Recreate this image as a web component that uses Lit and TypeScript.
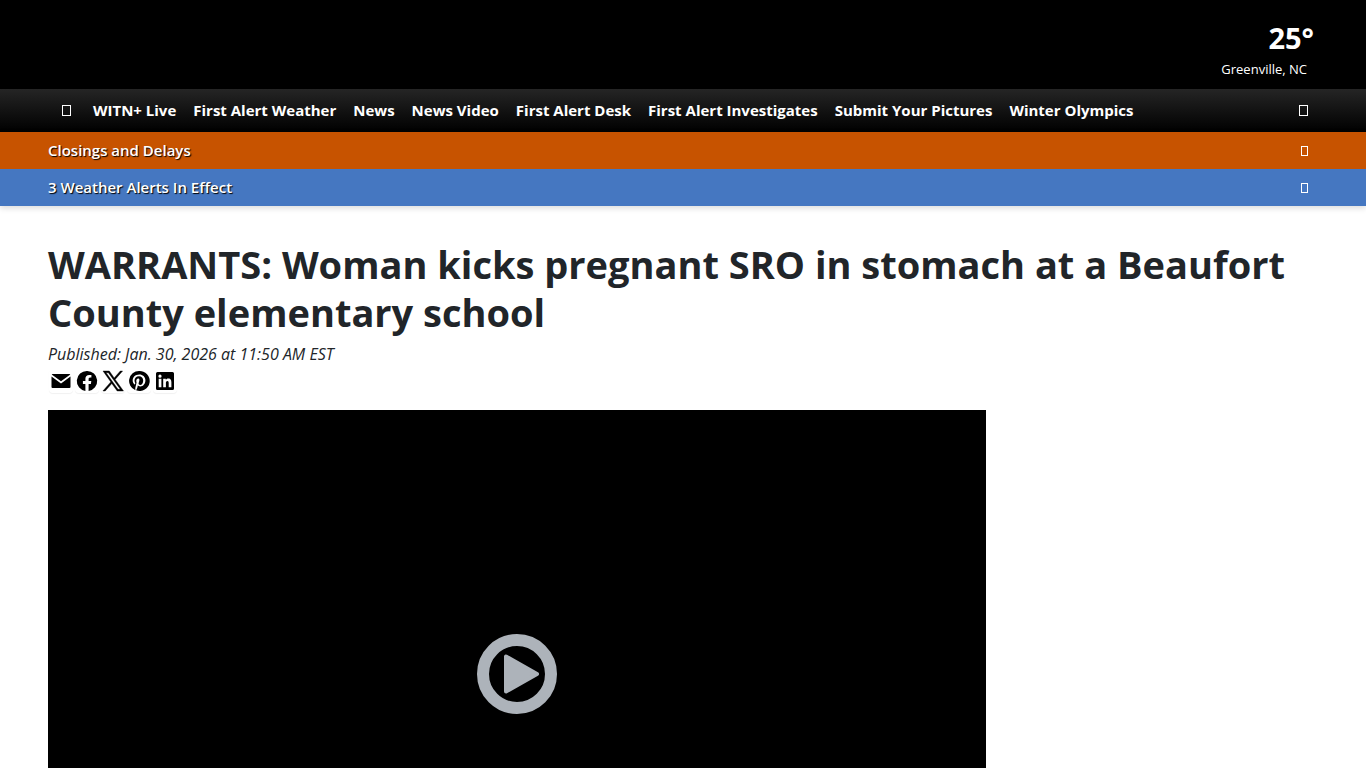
import { LitElement, html, css, svg } from "lit";
import { customElement } from "lit/decorators.js";

const NAV_LINKS = [
  "WITN+ Live",
  "First Alert Weather",
  "News",
  "News Video",
  "First Alert Desk",
  "First Alert Investigates",
  "Submit Your Pictures",
  "Winter Olympics",
];

const ALERTS = [
  { text: "Closings and Delays", tone: "closings" },
  { text: "3 Weather Alerts In Effect", tone: "weather" },
];

const SHARE_LINKS = [
  {
    label: "Email",
    shape: svg`<path d="M3.500 5h17a1 1 0 0 1 .8.4L12 12.300 2.700 5.400a1 1 0 0 1 .8-.4z"/><path d="M2.500 7.500 12 14.600l9.500-7.100v10.500a1 1 0 0 1-1 1h-17a1 1 0 0 1-1-1z"/>`,
  },
  {
    label: "Facebook",
    shape: svg`<path d="M12 2a10 10 0 0 0-1.6 19.9v-7H7.9V12h2.5V9.8c0-2.5 1.5-3.9 3.8-3.9 1.1 0 2.2.2 2.2.2v2.5h-1.2c-1.2 0-1.6.8-1.6 1.6V12h2.7l-.4 2.9h-2.3v7A10 10 0 0 0 12 2z"/>`,
  },
  {
    label: "X",
    shape: svg`<path fill-rule="evenodd" stroke="currentColor" stroke-width="0.4" d="M2 2h6.3l4.9 6.9L19.300 2H21.600l-7.400 8.400L22.500 22h-6.300l-5.400-7.500L4.200 22H1.900l7.900-9.100zM5.100 3.700 17 20.300h2.300L7.400 3.700z"/>`,
  },
  {
    label: "Pinterest",
    shape: svg`<path d="M12 2a10 10 0 0 0-3.600 19.300c-.1-.8-.2-2 0-2.900l1.200-5s-.3-.6-.3-1.500c0-1.400.8-2.400 1.800-2.400.9 0 1.300.6 1.300 1.400 0 .9-.5 2.100-.8 3.300-.2 1 .5 1.800 1.500 1.800 1.800 0 3.100-1.900 3.100-4.600 0-2.400-1.700-4.100-4.200-4.100-2.800 0-4.500 2.100-4.500 4.300 0 .9.3 1.800.7 2.300.1.100.1.200.1.300l-.3 1.100c0 .2-.1.200-.3.100-1.300-.6-2-2.400-2-3.900 0-3.100 2.300-6 6.600-6 3.400 0 6.100 2.400 6.100 5.700 0 3.400-2.200 6.200-5.200 6.200-1 0-2-.5-2.300-1.100l-.6 2.400c-.2.900-.8 1.900-1.200 2.600A10 10 0 1 0 12 2z"/>`,
  },
  {
    label: "LinkedIn",
    shape: svg`<path fill-rule="evenodd" d="M4.500 3h15A1.500 1.500 0 0 1 21 4.500v15a1.500 1.500 0 0 1-1.500 1.500h-15A1.500 1.500 0 0 1 3 19.500v-15A1.500 1.500 0 0 1 4.500 3zM5.700 9.700v8.500h2.700V9.700zM7 5.600a1.600 1.600 0 1 0 0 3.200 1.600 1.600 0 0 0 0-3.200zM10.200 9.700v8.500h2.700V14c0-1.100.3-2.100 1.500-2.100s1.300 1.100 1.300 2.200v4.100h2.700v-4.700c0-2.300-.5-4.100-3.200-4.100-1.200 0-2.100.7-2.400 1.400v-1.100z"/>`,
  },
];

const box = (w: number, h: number) => html`<svg
  width=${w}
  height=${h}
  viewBox="0 0 ${w} ${h}"
  aria-hidden="true"
>
  <rect x="0.5" y="0.5" width=${w - 1} height=${h - 1} fill="none" stroke="currentColor" />
</svg>`;

@customElement("app-root")
export class AppRoot extends LitElement {
  static styles = css`
    :host {
      display: block;
      height: 100vh;
      overflow: hidden;
      background: #fff;
      color: #212529;
      font-family: "Segoe UI", "Open Sans", "Noto Sans", sans-serif;
      font-size: 15px;
      line-height: 24px;
    }
    * {
      box-sizing: border-box;
    }
    a {
      color: inherit;
      text-decoration: none;
    }
    button {
      padding: 0;
      border: 0;
      background: none;
      color: inherit;
      font: inherit;
      cursor: pointer;
    }
    svg {
      display: block;
    }
    .masthead {
      display: flex;
      justify-content: flex-end;
      padding: 18px 52px 8px;
      background: #000;
      color: #fff;
    }
    .conditions {
      display: flex;
      flex-direction: column;
      align-items: flex-end;
    }
    .temp {
      font-size: 29px;
      font-weight: 700;
      line-height: 39px;
    }
    .place {
      padding-right: 7px;
      font-size: 13px;
      line-height: 24px;
    }
    .nav {
      display: flex;
      align-items: center;
      height: 43px;
      padding: 0 58px 0 62px;
      background: linear-gradient(#252525, #000);
      color: #fff;
      font-weight: 700;
    }
    .links {
      display: flex;
      gap: 17px;
      flex: 1;
      margin: 0 0 0 22px;
      padding: 0;
      list-style: none;
      white-space: nowrap;
    }
    .label {
      display: block;
      padding-bottom: 2px;
    }
    .alert {
      display: flex;
      align-items: center;
      justify-content: space-between;
      height: 37px;
      padding: 0 58px 0 48px;
      color: #fff;
      font-weight: 600;
      text-shadow: 1px 1px 1px #000;
    }
    .closings {
      background: #c75300;
    }
    .weather {
      background: #4577c1;
    }
    .alerts {
      box-shadow: 0 2px 6px rgba(0, 0, 0, 0.15);
    }
    main {
      padding: 34px 48px 0;
    }
    h1 {
      margin: 0;
      font-size: 38px;
      font-weight: 700;
      line-height: 48px;
    }
    .published {
      margin: 6px 0 3px;
      font-size: 16px;
      font-style: italic;
    }
    .share {
      display: flex;
      gap: 2px;
      margin: 0 1px 17px;
      color: #000;
    }
    .share a {
      border-radius: 4px;
      box-shadow: 0 1px 1px rgba(0, 0, 0, 0.06);
    }
    .video {
      display: grid;
      place-items: center;
      width: 73.858%;
      aspect-ratio: 16 / 9;
      background: #000;
      color: #adb3ba;
    }
  `;

  render() {
    return html`
      <header>
        <div class="masthead">
          <a class="conditions" href="#weather">
            <span class="temp">25°</span>
            <span class="place">Greenville, NC</span>
          </a>
        </div>
        <nav class="nav">
          <button aria-label="Menu">${box(9, 11)}</button>
          <ul class="links">
            ${NAV_LINKS.map((t) => html`<li><a class="label" href="#">${t}</a></li>`)}
          </ul>
          <button aria-label="Search">${box(9, 11)}</button>
        </nav>
        <div class="alerts">
          ${ALERTS.map(
            (a) => html`<div class="alert ${a.tone}">
              <a class="label" href="#">${a.text}</a>
              <button aria-label="Show ${a.text}">${box(7, 10)}</button>
            </div>`
          )}
        </div>
      </header>
      <main>
        <h1>
          WARRANTS: Woman kicks pregnant SRO in stomach at a Beaufort County
          elementary school
        </h1>
        <p class="published">Published: Jan. 30, 2026 at 11:50 AM EST</p>
        <div class="share">
          ${SHARE_LINKS.map(
            (s) => html`<a href="#" aria-label=${s.label}>
              <svg width="24" height="24" viewBox="0 0 24 24" fill="currentColor" aria-hidden="true">
                ${s.shape}
              </svg>
            </a>`
          )}
        </div>
        <div class="video">
          <button aria-label="Play video">
            <svg width="80" height="80" viewBox="0 0 80 80" aria-hidden="true">
              <circle cx="40" cy="40" r="34" fill="none" stroke="currentColor" stroke-width="12" />
              <path
                d="M29 22.500v35L60 40z"
                fill="currentColor"
                stroke="currentColor"
                stroke-width="4"
                stroke-linejoin="round"
              />
            </svg>
          </button>
        </div>
      </main>
    `;
  }
}
